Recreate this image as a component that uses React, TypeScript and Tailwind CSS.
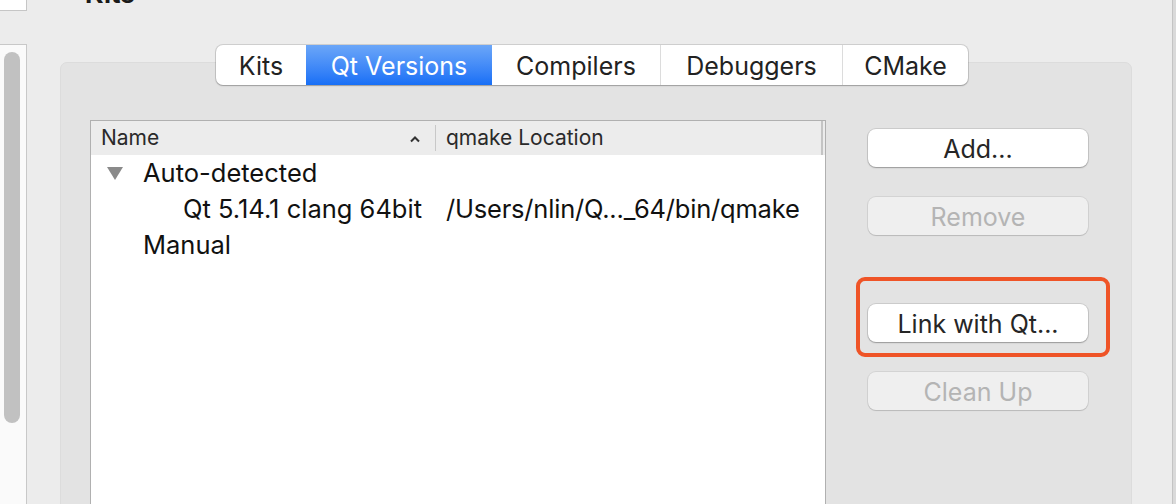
import React from 'react';

const font = { fontFamily: 'Inter, "Liberation Sans", sans-serif' };

const tabs = [
    { label: 'Kits', w: 'w-[90px]' },
    { label: 'Qt Versions', w: 'w-[186px]', active: true },
    { label: 'Compilers', w: 'w-[168px]' },
    { label: 'Debuggers', w: 'w-[182px]' },
    { label: 'CMake', w: 'w-[126px]' },
];

const Button = ({ label, disabled = false }: { label: string; disabled?: boolean }) => (
    <div
        className={
            disabled
                ? 'h-[38px] w-[220px] pt-[3px] rounded-[8px] bg-[#efefef] text-[#b4b4b4] flex items-center justify-center text-[25px] shadow-[0_0_0_1px_rgba(0,0,0,0.07),0_1px_1px_rgba(0,0,0,0.12)]'
                : 'h-[38px] w-[220px] pt-[3px] rounded-[8px] bg-white text-[#262626] flex items-center justify-center text-[25px] shadow-[0_0_0_1px_rgba(0,0,0,0.1),0_1px_1.5px_rgba(0,0,0,0.25)]'
        }
    >
        {label}
    </div>
);

export default function App() {
    return (
        <div className="w-[1176px] h-[504px] overflow-hidden bg-[#ececec] flex text-[#222]" style={font}>
            {/* left sidebar fragment */}
            <div className="w-[27px] shrink-0 flex flex-col">
                <div className="h-[11px] bg-white border-r border-b border-[#c6c6c6]" />
                <div className="h-[33px]" />
                <div className="flex-1 bg-[#fafafa] border-t border-r border-[#c8c8c8] pt-[7px] pl-[4px]">
                    <div className="w-[16px] h-[371px] rounded-full bg-[#c1c1c1]" />
                </div>
            </div>

            {/* main */}
            <div className="flex-1 flex flex-col">
                <div className="ml-[58px] mt-[-21px] h-[30px] text-[26px] font-bold leading-[30px] text-[#1a1a1a]">Kits</div>

                <div className="ml-[33px] w-[1072px] mt-[36px] flex flex-col">
                    {/* tab bar */}
                    <div className="relative z-10 ml-[156px] -mb-[23px] flex h-[40px] w-fit rounded-[7px] bg-white shadow-[0_0_0_1px_rgba(0,0,0,0.12),0_1px_1.5px_rgba(0,0,0,0.22)] overflow-hidden">
                        {tabs.map((t, i) => (
                            <div
                                key={t.label}
                                className={
                                    t.active
                                        ? `${t.w} pt-[3px] flex items-center justify-center text-[25px] text-white bg-gradient-to-b from-[#6ba6f8] to-[#166ff6]`
                                        : `${t.w} pt-[3px] flex items-center justify-center text-[25px] text-[#222] ${i > 2 ? 'border-l border-[#dcdcdc]' : ''}`
                                }
                            >
                                {t.label}
                            </div>
                        ))}
                    </div>

                    {/* group box */}
                    <div className="h-[500px] rounded-[7px] bg-[#e3e3e3] border border-[#dcdcdc] pt-[57px] pl-[29px] flex gap-[42px]">
                        {/* tree view */}
                        <div className="w-[736px] h-[420px] bg-white border border-[#b0b0b0] flex flex-col">
                            <div className="h-[34px] bg-[#ececec] flex items-center text-[21px] text-[#2a2a2a]">
                                <div className="w-[344px] pl-[10px] pr-[14px] flex items-center justify-between">
                                    <span>Name</span>
                                    <svg width="12" height="8" viewBox="0 0 12 8" className="mt-[2px]">
                                        <path d="M2 6.5 L6 2.5 L10 6.5" fill="none" stroke="#333" strokeWidth="2" />
                                    </svg>
                                </div>
                                <div className="w-[1px] h-[26px] bg-[#c8c8c8]" />
                                <div className="flex-1 pl-[10px]">qmake Location</div>
                                <div className="w-[2px] h-[34px] bg-[#c4c4c4] mr-[2px]" />
                            </div>
                            <div className="flex flex-col text-[25.5px] text-[#111]">
                                <div className="h-[36px] flex items-center">
                                    <svg width="16" height="13" viewBox="0 0 16 13" className="ml-[16px] mr-[20px]">
                                        <path d="M0 0 H16 L8 13 Z" fill="#8a8a8a" />
                                    </svg>
                                    <span>Auto-detected</span>
                                </div>
                                <div className="h-[36px] flex items-center">
                                    <span className="w-[355px] pl-[92px]">Qt 5.14.1 clang 64bit</span>
                                    <span className="tracking-[-0.2px]">/Users/nlin/Q..._64/bin/qmake</span>
                                </div>
                                <div className="h-[36px] flex items-center pl-[52px]">Manual</div>
                            </div>
                        </div>

                        {/* buttons */}
                        <div className="pt-[9px] flex flex-col">
                            <Button label="Add..." />
                            <div className="h-[30px]" />
                            <Button label="Remove" disabled />
                            <div className="h-[69px]" />
                            <div className="relative">
                                <Button label="Link with Qt..." />
                                <div className="absolute left-[-12px] top-[-27px] w-[254px] h-[80px] rounded-[9px] border-[4px] border-[#ef5427]" />
                            </div>
                            <div className="h-[30px]" />
                            <Button label="Clean Up" disabled />
                        </div>
                    </div>
                </div>
            </div>

            {/* right edge */}
            <div className="w-[4px] shrink-0 border-l border-[#c4c4c4] bg-[#dadada]" />
        </div>
    );
}
